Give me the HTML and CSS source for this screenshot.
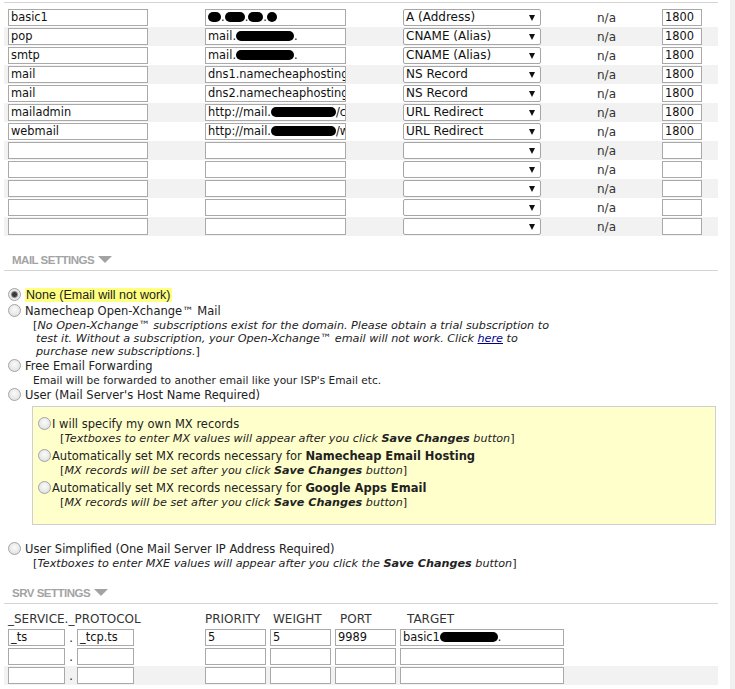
FILE: index.html
```html
<!DOCTYPE html>
<html>
<head>
    <title>Advanced DNS</title>
    <link rel="stylesheet" href="styles.css">
</head>
<body>
<div class="page">
    <div class="records">
        <div class="rec">
            <span class="field host">basic1</span>
            <span class="field value"><i class="blot w13"></i>.<i class="blot w20"></i>.<i class="blot w15"></i>.<i class="blot w10"></i></span>
            <span class="select">A (Address)<i class="arrow"></i></span>
            <span class="na">n/a</span>
            <span class="field ttl">1800</span>
        </div>
        <div class="rec">
            <span class="field host">pop</span>
            <span class="field value">mail.<i class="blot w60"></i>.</span>
            <span class="select">CNAME (Alias)<i class="arrow"></i></span>
            <span class="na">n/a</span>
            <span class="field ttl">1800</span>
        </div>
        <div class="rec">
            <span class="field host">smtp</span>
            <span class="field value">mail.<i class="blot w60"></i>.</span>
            <span class="select">CNAME (Alias)<i class="arrow"></i></span>
            <span class="na">n/a</span>
            <span class="field ttl">1800</span>
        </div>
        <div class="rec">
            <span class="field host">mail</span>
            <span class="field value">dns1.namecheaphosting.com</span>
            <span class="select">NS Record<i class="arrow"></i></span>
            <span class="na">n/a</span>
            <span class="field ttl">1800</span>
        </div>
        <div class="rec">
            <span class="field host">mail</span>
            <span class="field value">dns2.namecheaphosting.com</span>
            <span class="select">NS Record<i class="arrow"></i></span>
            <span class="na">n/a</span>
            <span class="field ttl">1800</span>
        </div>
        <div class="rec">
            <span class="field host">mailadmin</span>
            <span class="field value">http://mail.<i class="blot w62"></i>/cpanel</span>
            <span class="select">URL Redirect<i class="arrow"></i></span>
            <span class="na">n/a</span>
            <span class="field ttl">1800</span>
        </div>
        <div class="rec">
            <span class="field host">webmail</span>
            <span class="field value">http://mail.<i class="blot w62"></i>/webmail</span>
            <span class="select">URL Redirect<i class="arrow"></i></span>
            <span class="na">n/a</span>
            <span class="field ttl">1800</span>
        </div>
        <div class="rec">
            <span class="field host"></span>
            <span class="field value"></span>
            <span class="select"><i class="arrow"></i></span>
            <span class="na">n/a</span>
            <span class="field ttl"></span>
        </div>
        <div class="rec">
            <span class="field host"></span>
            <span class="field value"></span>
            <span class="select"><i class="arrow"></i></span>
            <span class="na">n/a</span>
            <span class="field ttl"></span>
        </div>
        <div class="rec">
            <span class="field host"></span>
            <span class="field value"></span>
            <span class="select"><i class="arrow"></i></span>
            <span class="na">n/a</span>
            <span class="field ttl"></span>
        </div>
        <div class="rec">
            <span class="field host"></span>
            <span class="field value"></span>
            <span class="select"><i class="arrow"></i></span>
            <span class="na">n/a</span>
            <span class="field ttl"></span>
        </div>
        <div class="rec">
            <span class="field host"></span>
            <span class="field value"></span>
            <span class="select"><i class="arrow"></i></span>
            <span class="na">n/a</span>
            <span class="field ttl"></span>
        </div>
    </div>

    <div class="sect-head mail-head">MAIL SETTINGS<i class="caret"></i></div>

    <div class="mail">
        <div class="opt"><input class="radio" type="radio" name="mail" checked><span class="hl">None (Email will not work)</span></div>
        <div class="opt"><input class="radio" type="radio" name="mail">Namecheap Open-Xchange™ Mail</div>
        <div class="note">[<em>No Open-Xchange™ subscriptions exist for the domain. Please obtain a trial subscription to<br>test it. Without a subscription, your Open-Xchange™ email will not work. Click <a href="#">here</a> to<br>purchase new subscriptions.</em>]</div>
        <div class="opt"><input class="radio" type="radio" name="mail">Free Email Forwarding</div>
        <div class="note plain">Email will be forwarded to another email like your ISP's Email etc.</div>
        <div class="opt"><input class="radio" type="radio" name="mail">User (Mail Server's Host Name Required)</div>

        <div class="mxbox">
            <div class="opt"><input class="radio" type="radio" name="mx">I will specify my own MX records</div>
            <div class="note">[<em>Textboxes to enter MX values will appear after you click <b>Save Changes</b> button</em>]</div>
            <div class="opt"><input class="radio" type="radio" name="mx">Automatically set MX records necessary for <b>Namecheap Email Hosting</b></div>
            <div class="note">[<em>MX records will be set after you click <b>Save Changes</b> button</em>]</div>
            <div class="opt"><input class="radio" type="radio" name="mx">Automatically set MX records necessary for <b>Google Apps Email</b></div>
            <div class="note">[<em>MX records will be set after you click <b>Save Changes</b> button</em>]</div>
        </div>

        <div class="opt simple"><input class="radio" type="radio" name="mail">User Simplified (One Mail Server IP Address Required)</div>
        <div class="note">[<em>Textboxes to enter MXE values will appear after you click the <b>Save Changes</b> button</em>]</div>
    </div>

    <div class="sect-head srv-head">SRV SETTINGS<i class="caret"></i></div>

    <div class="srv">
        <div class="srv-row srv-labels">
            <span class="lbl-svc">_SERVICE._PROTOCOL</span>
            <span class="lbl-pri">PRIORITY</span>
            <span class="lbl-wgt">WEIGHT</span>
            <span class="lbl-port">PORT</span>
            <span class="lbl-tgt">TARGET</span>
        </div>
        <div class="srv-row">
            <span class="field svc">_ts</span><span class="dot">.</span><span class="field proto">_tcp.ts</span>
            <span class="field pri">5</span>
            <span class="field wgt">5</span>
            <span class="field port">9989</span>
            <span class="field tgt">basic1<i class="blot w60"></i>.</span>
        </div>
        <div class="srv-row">
            <span class="field svc"></span><span class="dot">.</span><span class="field proto"></span>
            <span class="field pri"></span>
            <span class="field wgt"></span>
            <span class="field port"></span>
            <span class="field tgt"></span>
        </div>
        <div class="srv-row striped">
            <span class="field svc"></span><span class="dot">.</span><span class="field proto"></span>
            <span class="field pri"></span>
            <span class="field wgt"></span>
            <span class="field port"></span>
            <span class="field tgt"></span>
        </div>
    </div>
</div>
<div class="gutter"></div>
</body>
</html>
```

FILE: styles.css
```css
/* page frame */
body {
    margin: 0;
    display: flex;
    min-height: 100vh;
    font-family: "DejaVu Sans", Verdana, sans-serif;
    font-size: 11.5px;
    color: #222;
    background: #fff;
}
.page {
    width: 730px;
}
.gutter {
    width: 5px;
    background: #f1f1f1;
}

/* host records */
.records {
    margin: 2px 12px 0 4px;
    border-top: 1px solid #d4d4d4;
    padding-top: 5px;
}
.rec {
    display: flex;
    align-items: center;
    height: 19px;
}
.rec:nth-child(even) {
    background: #f2f2f2;
}
.field {
    box-sizing: border-box;
    height: 17px;
    line-height: 15px;
    border: 1px solid #a9a9a9;
    background: #fff;
    padding-left: 2px;
    white-space: nowrap;
    overflow: hidden;
    font-size: 11.4px;
    color: #111;
}
.host {
    margin-left: 4px;
    width: 140px;
}
.value {
    margin-left: 57px;
    width: 141px;
}
.select {
    box-sizing: border-box;
    margin-left: 57px;
    width: 138px;
    height: 17px;
    line-height: 15px;
    border: 1px solid #a6a6a6;
    border-radius: 2px;
    background: #fff;
    padding-left: 2px;
    position: relative;
    font-size: 12px;
    color: #111;
}
.arrow {
    position: absolute;
    right: 5px;
    top: 5px;
    border-left: 3px solid transparent;
    border-right: 3px solid transparent;
    border-top: 6px solid #111;
}
.na {
    box-sizing: border-box;
    width: 121px;
    padding-left: 10px;
    text-align: center;
    font-size: 12px;
    color: #333;
}
.ttl {
    width: 40px;
}

/* redacted bits */
.blot {
    display: inline-block;
    height: 10px;
    background: #000;
    border-radius: 5px;
    vertical-align: -1px;
}
.w10 { width: 10px; }
.w13 { width: 13px; }
.w15 { width: 15px; }
.w20 { width: 20px; }
.w60 { width: 58px; }
.w62 { width: 65px; }

/* section headers */
.sect-head {
    margin: 0 12px 0 4px;
    padding: 0 0 3px 8px;
    line-height: 14px;
    border-bottom: 1px solid #d4d4d4;
    font-family: "Liberation Sans", Arial, sans-serif;
    font-weight: bold;
    font-size: 11.5px;
    letter-spacing: -0.5px;
    color: #a3a3a3;
}
.mail-head {
    margin-top: 17px;
}
.srv-head {
    margin-top: 16px;
}
.caret {
    display: inline-block;
    margin-left: 4px;
    border-left: 7px solid transparent;
    border-right: 7px solid transparent;
    border-top: 7px solid #a3a3a3;
    vertical-align: 1px;
}

/* mail options */
.mail {
    padding: 16px 12px 0 8px;
}
.opt {
    line-height: 16px;
    white-space: nowrap;
}
.radio {
    appearance: none;
    -webkit-appearance: none;
    box-sizing: border-box;
    width: 13px;
    height: 13px;
    margin: 0 4px 0 0;
    border: 1px solid #a4a4a4;
    border-radius: 50%;
    background: radial-gradient(circle at 50% 40%, #fbfbfb, #dadada);
    vertical-align: -2px;
}
.radio:checked {
    background: radial-gradient(circle, #3a3a3a 0 2px, #8c8c8c 3px, #e6e6e6 4px, #f4f4f4);
}
.hl {
    font-family: "Liberation Sans", Arial, sans-serif;
    font-size: 12.5px;
    background: #ffff80;
    padding: 0 2px 0 1px;
}
.note {
    padding-left: 28px;
    text-indent: -3px;
    line-height: 13px;
    font-size: 11.2px;
    white-space: nowrap;
}
.note em {
    font-style: italic;
}
.note a {
    color: #00008b;
}
.note.plain {
    text-indent: 0;
    padding-left: 25px;
    font-size: 10.6px;
}
.mxbox {
    margin: 3px 2px 0 24px;
    padding: 9px 5px 15px 5px;
    border: 1px solid #cfcfcf;
    background: #ffffcc;
}
.mxbox .radio {
    margin-right: 1px;
}
.mxbox .note {
    padding-left: 25px;
}
.mxbox .opt + .note + .opt {
    margin-top: 3px;
}
.simple {
    margin-top: 16px;
}

/* srv records */
.srv {
    margin: 0 12px 0 4px;
    padding-top: 5px;
}
.srv-row {
    display: flex;
    align-items: center;
    height: 19px;
}
.srv-row.striped {
    background: #f2f2f2;
}
.srv-labels {
    font-size: 12px;
    color: #333;
}
.lbl-svc { margin-left: 4px; width: 197px; }
.lbl-pri { width: 68px; }
.lbl-wgt { width: 67px; }
.lbl-port { width: 67px; }
.svc {
    margin-left: 4px;
    width: 57px;
}
.dot {
    width: 12px;
    text-align: center;
}
.proto { width: 57px; }
.pri { margin-left: 71px; width: 61px; }
.wgt { margin-left: 4px; width: 61px; }
.port { margin-left: 4px; width: 61px; }
.tgt { margin-left: 4px; width: 164px; }
```
